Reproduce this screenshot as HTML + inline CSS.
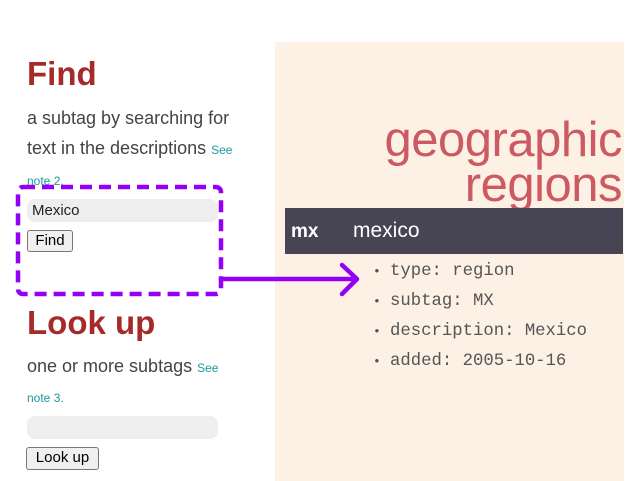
<!DOCTYPE html>
<html><head><style>
*{margin:0;padding:0;box-sizing:border-box}
body{width:641px;height:481px;background:#fff;position:relative;overflow:hidden;font-family:"Liberation Sans",sans-serif}
.a{position:absolute;white-space:nowrap}
h1{position:absolute;color:#a52a2a;font-size:33px;font-weight:bold;left:27px}
.p{color:#444;font-size:18px}
.l{color:#1a9a9a;font-size:12px}
.inp{position:absolute;background:#eee;border-radius:8px;left:27px;width:191px;height:23px}
.btn{position:absolute;border:1px solid #777;background:#f0f0f0;border-radius:3px;font-size:15px;color:#000;text-align:center;line-height:20px}
.panel{position:absolute;left:275px;top:42px;width:349px;height:439px;background:#fdf1e6}
.t{position:absolute;right:2px;color:#cc5a60;font-size:49px;font-weight:300;letter-spacing:-0.5px}
.bar{position:absolute;left:10px;top:166px;width:338px;height:46px;background:#474553;color:#fff}
.m{font-family:"Liberation Mono",monospace;font-size:17.3px;color:#555;position:absolute;left:115px}
.m:before{content:"•";position:absolute;left:-17px;font-size:13px;top:2px}
</style></head><body>
<h1 style="top:55px">Find</h1>
<div class="a p" style="left:27px;top:108px">a subtag by searching for</div>
<div class="a p" style="left:27px;top:138px">text in the descriptions <span class="l">See</span></div>
<div class="a l" style="left:27px;top:174px">note 2.</div>
<div class="inp" style="top:199px"><span class="a" style="left:5px;top:3px;font-size:15px;color:#222">Mexico</span></div>
<div class="btn" style="left:27px;top:230px;width:46px;height:22px">Find</div>
<h1 style="top:304px">Look up</h1>
<div class="a p" style="left:27px;top:356px">one or more subtags <span class="l">See</span></div>
<div class="a l" style="left:27px;top:391px">note 3.</div>
<div class="inp" style="top:416px"></div>
<div class="btn" style="left:26px;top:447px;width:73px;height:23px">Look up</div>
<div class="panel">
<div class="t" style="top:70px">geographic</div>
<div class="t" style="top:115px">regions</div>
<div class="bar"><span class="a" style="left:6px;top:13px;font-size:19px;font-weight:bold">mx</span><span class="a" style="left:68px;top:11px;font-size:21px">mexico</span></div>
<div class="m" style="top:220px">type: region</div>
<div class="m" style="top:250px">subtag: MX</div>
<div class="m" style="top:280px">description: Mexico</div>
<div class="m" style="top:310px">added: 2005-10-16</div>
</div>
<svg class="a" style="left:0;top:0" width="641" height="481">
<rect x="18" y="187" width="203" height="107" rx="5" fill="none" stroke="#9400f5" stroke-width="4.5" stroke-dasharray="12 7"/>
<path d="M221 279H357M342 265L357 279L342 294" fill="none" stroke="#9400f5" stroke-width="4.5" stroke-linecap="round" stroke-linejoin="round"/>
</svg>
</body></html>
